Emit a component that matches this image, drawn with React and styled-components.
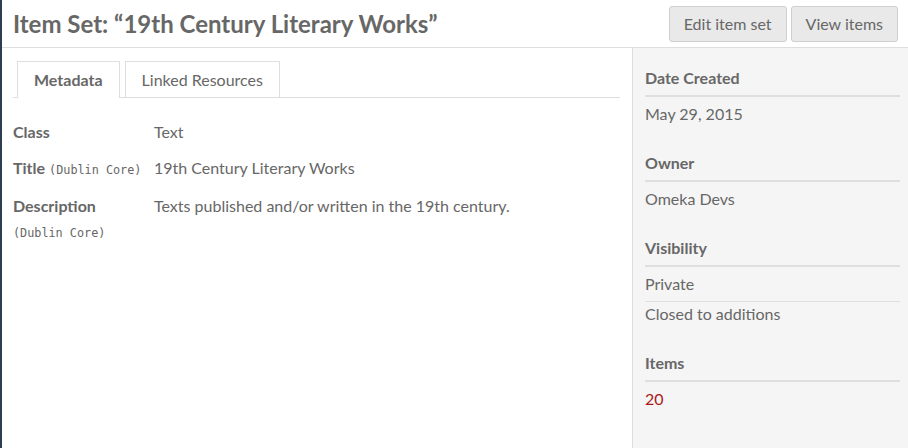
import React from 'react';
import styled, {createGlobalStyle} from "styled-components";

const GlobalStyle = createGlobalStyle`
html, body {
margin: 0;
padding: 0;
background: #fff;
}
body {
font-family: Lato, "Open Sans", sans-serif;
font-size: 16px;
line-height: 24px;
color: #676767;
}`;

const Page = styled.div`
width: 908px;
height: 448px;
display: flex;
flex-direction: column;
border-left: 2px solid #2c3e50;
box-sizing: border-box;
overflow: hidden;`;
const Header = styled.header`
height: 47px;
flex-shrink: 0;
display: flex;
align-items: center;
justify-content: space-between;
padding: 0 10px 0 11px;
border-bottom: 1px solid #dedede;`;
const PageTitle = styled.h1`
margin: 0;
font-size: 24px;
font-weight: 700;
color: #676767;`;
const Actions = styled.div`
display: flex;
gap: 4px;`;
const Button = styled.button`
font-family: inherit;
font-size: 16px;
color: #676767;
background: #e9e9e9;
border: 1px solid #cfcfcf;
border-radius: 3px;
height: 36px;
padding: 0 14px;
cursor: pointer;`;
const Body = styled.div`
flex: 1;
display: flex;`;
const Main = styled.main`
width: 630px;
box-sizing: border-box;
padding: 13px 12px 0 11px;`;
const TabList = styled.div`
display: flex;
gap: 5px;
padding-left: 4px;
border-bottom: 1px solid #dedede;`;
const Tab = styled.div`
display: flex;
align-items: center;
padding: 0 16px;
border: 1px solid #dedede;
border-bottom: none;
background: #fff;
font-weight: ${props => props.$active ? 700 : 400};
margin-bottom: ${props => props.$active ? "-1px" : "0"};
height: ${props => props.$active ? "36px" : "35px"};`;
const Properties = styled.div`
padding-top: 22px;
display: flex;
flex-direction: column;
gap: 12px;`;
const Row = styled.div`
display: flex;`;
const Label = styled.div`
width: 141px;
flex-shrink: 0;
font-weight: 700;`;
const Vocab = styled.span`
font-family: "DejaVu Sans Mono", "Liberation Mono", monospace;
font-size: 11.8px;
font-weight: 400;
display: ${props => props.$block ? "block" : "inline"};
margin-left: ${props => props.$block ? "0" : "4px"};
margin-top: ${props => props.$block ? "3px" : "0"};`;
const Value = styled.div`
flex: 1;`;
const Sidebar = styled.aside`
flex: 1;
background: #f5f5f5;
border-left: 1px solid #dedede;
padding: 18px 8px 0 12px;`;
const Section = styled.section`
margin-bottom: 25px;`;
const SectionTitle = styled.h3`
margin: 0;
font-size: 16px;
font-weight: 700;
padding-bottom: 5px;
border-bottom: 2px solid #dfdfdf;`;
const SideValue = styled.div`
padding-top: 5px;
color: ${props => props.$link ? "#a91919" : "inherit"};
& + & {
margin-top: 5px;
padding-top: 0;
border-top: 1px solid #dfdfdf;
}`;

const props = [
    {label: "Class", value: "Text"},
    {label: "Title", vocab: "inline", value: "19th Century Literary Works"},
    {label: "Description", vocab: "block", value: "Texts published and/or written in the 19th century."},
];

const App = () => {
    return (
        <>
            <GlobalStyle/>
            <Page>
                <Header>
                    <PageTitle>Item Set: “19th Century Literary Works”</PageTitle>
                    <Actions>
                        <Button>Edit item set</Button>
                        <Button>View items</Button>
                    </Actions>
                </Header>
                <Body>
                    <Main>
                        <TabList>
                            <Tab $active>Metadata</Tab>
                            <Tab>Linked Resources</Tab>
                        </TabList>
                        <Properties>
                            {props.map(p => (
                                <Row key={p.label}>
                                    <Label>
                                        {p.label}
                                        {p.vocab && <Vocab $block={p.vocab === "block"}>(Dublin Core)</Vocab>}
                                    </Label>
                                    <Value>{p.value}</Value>
                                </Row>
                            ))}
                        </Properties>
                    </Main>
                    <Sidebar>
                        <Section>
                            <SectionTitle>Date Created</SectionTitle>
                            <SideValue>May 29, 2015</SideValue>
                        </Section>
                        <Section>
                            <SectionTitle>Owner</SectionTitle>
                            <SideValue>Omeka Devs</SideValue>
                        </Section>
                        <Section>
                            <SectionTitle>Visibility</SectionTitle>
                            <SideValue>Private</SideValue>
                            <SideValue>Closed to additions</SideValue>
                        </Section>
                        <Section>
                            <SectionTitle>Items</SectionTitle>
                            <SideValue $link>20</SideValue>
                        </Section>
                    </Sidebar>
                </Body>
            </Page>
        </>
    );
};

export default App;
